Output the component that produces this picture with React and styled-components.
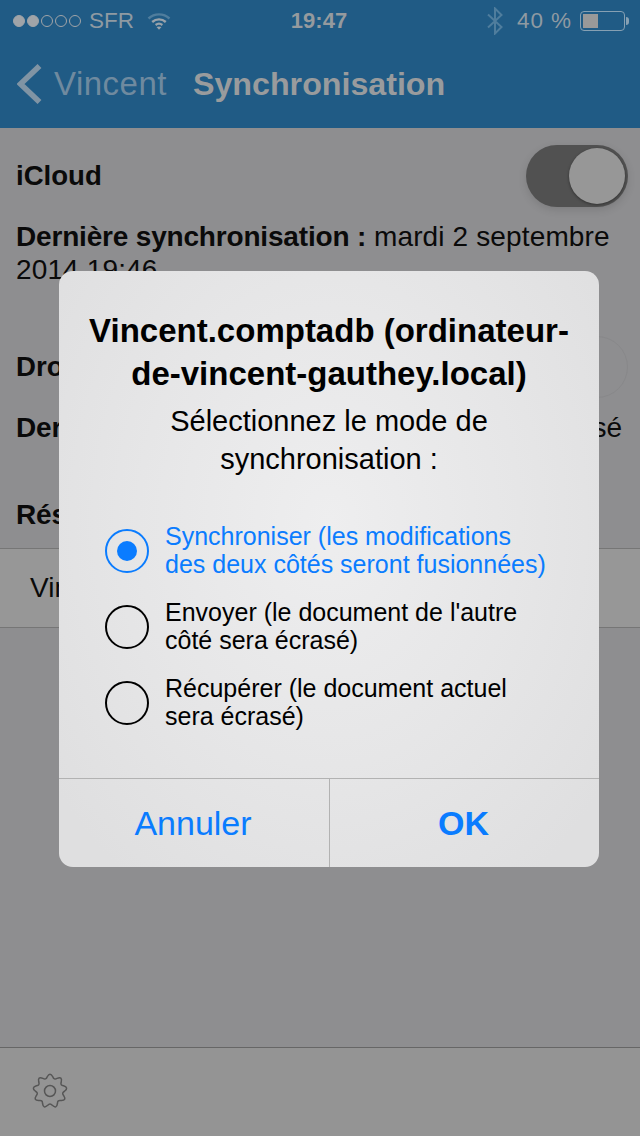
import React from "react";
import styled, { createGlobalStyle } from "styled-components";

const Global = createGlobalStyle`
  html, body { margin: 0; padding: 0; }
  body { font-family: "Liberation Sans", Arial, sans-serif; background: #8e8e90; }
  * { box-sizing: border-box; }
`;
const Screen = styled.div`
  position: relative; width: 640px; height: 1136px; overflow: hidden;
  display: flex; flex-direction: column; background: #8e8e90; color: #0a0a0a;
`;
const Header = styled.header`
  height: 128px; flex: none; background: #205b85; display: flex; flex-direction: column;
`;
const StatusBar = styled.div`
  height: 42px; display: grid; grid-template-columns: 1fr auto 1fr; align-items: center;
  padding: 0 15px 0 13px; font-size: 22.5px; color: #8f9aa2;
`;
const StatusLeft = styled.div`display: flex; align-items: center; gap: 8px;`;
const Carrier = styled.span`margin-right: 5px;`;
const Dots = styled.div`display: flex; gap: 2px;`;
const Dot = styled.span`
  width: 12px; height: 12px; border-radius: 50%;
  border: 1px solid #a0a4a8; background: ${p => (p.$on ? "#a0a4a8" : "transparent")};
`;
const Time = styled.div`font-weight: 700; color: #959a9e; font-size: 22px;`;
const StatusRight = styled.div`display: flex; align-items: center; justify-content: flex-end;`;
const Percent = styled.span`margin: 0 8px 0 14px; white-space: nowrap; letter-spacing: .9px;`;
const Battery = styled.div`
  position: relative; width: 45px; height: 20px; border: 1px solid #86a0b3; border-radius: 4px; padding: 2px;
  &::after { content: ""; position: absolute; right: -5px; top: 5px; width: 3px; height: 8px; background: #86a0b3; border-radius: 0 3px 3px 0; }
`;
const BatteryFill = styled.div`width: 15px; height: 100%; background: #999;`;
const Nav = styled.nav`
  flex: 1; display: flex; align-items: center; padding: 0 0 2px 17px;
`;
const Back = styled.span`font-size: 33px; margin-left: 12px; color: #6f8a9f; letter-spacing: .5px;`;
const Title = styled.span`font-size: 32.25px; font-weight: 700; margin-left: 26px; color: #999b9d; letter-spacing: -.03px;`;
const Content = styled.main`flex: 1; padding-top: 28px; display: flex; flex-direction: column;`;
const SwitchRow = styled.div`
  height: 40px; margin-top: ${p => p.$top || 0}px; padding: 0 12px 0 16px;
  display: flex; align-items: center; justify-content: space-between;
  font-size: 27.6px; font-weight: 700;
`;
const Toggle = styled.div`
  position: relative; width: 102px; height: 62px; border-radius: 31px; flex: none;
  background: ${p => (p.$on ? "#515151" : "transparent")};
  border: ${p => (p.$on ? "none" : "1.5px solid #88888a")};
  box-shadow: ${p => (p.$on ? "0 3px 8px rgba(0,0,0,.12)" : "none")};
`;
const Knob = styled.div`
  position: absolute; right: 3px; top: 3px; width: 56px; height: 56px; border-radius: 50%;
  background: #979797; box-shadow: 0 1px 3px rgba(0,0,0,.4);
`;
const Para = styled.p`
  margin: ${p => p.$top || 0}px 0 0; padding: 0 16px; font-size: 28px; line-height: 33px; letter-spacing: .135px;
`;
const Label = styled.b`font-weight: 700; letter-spacing: -.18px;`;
const List = styled.div`
  margin-top: 17px; height: 80px; padding-left: 30px; display: flex; align-items: center;
  background: #979797; border-top: 1px solid #767676; border-bottom: 1px solid #767676; font-size: 28px;
`;
const Spacer = styled.div`flex: 1;`;
const Toolbar = styled.footer`
  height: 89px; flex: none; background: #949494; border-top: 1px solid #666;
  display: flex; align-items: center; padding: 0 0 2px 32px;
`;
const Alert = styled.section`
  position: absolute; left: 59px; top: 271px; width: 540px; height: 596px; border-radius: 14px; overflow: hidden;
  background: radial-gradient(ellipse at 50% 42%, #eeeeef 0%, #e6e6e7 50%, #dfdfe0 90%);
  display: flex; flex-direction: column; color: #000;
`;
const AlertBody = styled.div`flex: 1; display: flex; flex-direction: column; align-items: center; padding-top: 38px;`;
const AlertTitle = styled.h2`margin: 0; width: 500px; font-size: 33px; line-height: 43px; font-weight: 700; text-align: center;`;
const Message = styled.p`margin: 7px 0 0; font-size: 29px; line-height: 38px; text-align: center; width: 420px;`;
const Options = styled.div`width: 100%; margin-top: 44px; padding-left: 46px; display: flex; flex-direction: column; gap: 20px;`;
const Option = styled.div`
  display: flex; align-items: center; gap: 16px; height: 56px;
  color: ${p => (p.$active ? "#0a7cff" : "#000")};
`;
const Radio = styled.div`
  width: 44px; height: 44px; margin-top: 2px; border-radius: 50%; flex: none; border: 2px solid currentColor;
  display: flex; align-items: center; justify-content: center;
`;
const RadioDot = styled.div`width: 20px; height: 20px; border-radius: 50%; background: currentColor;`;
const OptionText = styled.div`font-size: 25px; line-height: 28px; white-space: pre-line;`;
const Buttons = styled.div`height: 89px; flex: none; display: grid; grid-template-columns: 270px 270px; border-top: 1px solid #b2b2b2;`;
const ActionButton = styled.button`
  border: 0; background: transparent; font-family: inherit; font-size: 34px; padding: 0 2px 0 0; color: #0a7cff;
  font-weight: ${p => (p.$strong ? 700 : 400)};
  border-left: ${p => (p.$strong ? "1px solid #b2b2b2" : "none")};
`;

const Wifi = () => (
  <svg width="24" height="18" viewBox="0 0 24 18" fill="none">
    <path d="M1.5 6.5C7.5 1 16.5 1 22.5 6.5" stroke="#4f7d9d" strokeWidth="2.4" />
    <path d="M5.2 10C9.2 6.5 14.8 6.5 18.8 10" stroke="#9aa3aa" strokeWidth="2.4" />
    <path d="M8.6 13C10.6 11.5 13.4 11.5 15.4 13" stroke="#9aa3aa" strokeWidth="2.2" />
    <path d="M9.5 15L12 17.8 14.5 15C13 14.2 11 14.2 9.5 15Z" fill="#9aa3aa" />
  </svg>
);
const Bluetooth = () => (
  <svg width="16" height="28" viewBox="0 0 16 28" fill="none" stroke="#4f7d9d" strokeWidth="2">
    <path d="M1 7.5L14.5 20 8 26.5V1.5L14.5 8 1 20.5" />
  </svg>
);
const Chevron = () => (
  <svg width="25" height="40" viewBox="0 0 25 40" fill="none" stroke="#8094a4" strokeWidth="5.6">
    <path d="M22.5 2L3.5 20 22.5 38" />
  </svg>
);
const gearPath = () => {
  const teeth = 9, s = Math.PI / teeth;
  const p = (r, t) => `${(18 + r * Math.cos(t)).toFixed(2)} ${(18 + r * Math.sin(t)).toFixed(2)}`;
  let d = "";
  for (let i = 0; i < teeth; i++) {
    const a = (i / teeth) * Math.PI * 2 - Math.PI / 2;
    d += `${i ? "Q" + p(11.5, a - s) + " " : "M"}${p(14.5, a - s * 0.55)} Q${p(19.5, a)} ${p(14.5, a + s * 0.55)} `;
  }
  const last = -Math.PI / 2 - s;
  return d + `Q${p(11.5, last)} ${p(14.5, -Math.PI / 2 - s * 0.55)}Z`;
};
const Gear = () => (
  <svg width="36" height="36" viewBox="0 0 36 36" fill="none" stroke="#565656" strokeWidth="1.5">
    <path d={gearPath()} />
    <circle cx="18" cy="18" r="5.5" />
  </svg>
);

export default function App() {
  return (
    <Screen>
      <Global />
      <Header>
        <StatusBar>
          <StatusLeft>
            <Dots>{[1, 1, 0, 0, 0].map((on, i) => <Dot key={i} $on={!!on} />)}</Dots>
            <Carrier>SFR</Carrier>
            <Wifi />
          </StatusLeft>
          <Time>19:47</Time>
          <StatusRight>
            <Bluetooth />
            <Percent>40 %</Percent>
            <Battery><BatteryFill /></Battery>
          </StatusRight>
        </StatusBar>
        <Nav>
          <Chevron />
          <Back>Vincent</Back>
          <Title>Synchronisation</Title>
        </Nav>
      </Header>
      <Content>
        <SwitchRow>iCloud<Toggle $on><Knob /></Toggle></SwitchRow>
        <Para $top={24}><Label>Dernière synchronisation :</Label> mardi 2 septembre 2014 19:46</Para>
        <SwitchRow $top={61}>Dropbox<Toggle /></SwitchRow>
        <Para $top={24}><Label>Dernière synchronisation :</Label> Jamais synchronisé</Para>
        <Para $top={54}><Label>Résultat</Label></Para>
        <List>Vincent.comptadb</List>
        <Spacer />
      </Content>
      <Toolbar><Gear /></Toolbar>
      <Alert>
        <AlertBody>
          <AlertTitle>Vincent.comptadb (ordinateur-de-vincent-gauthey.local)</AlertTitle>
          <Message>Sélectionnez le mode de synchronisation :</Message>
          <Options>
            <Option $active>
              <Radio><RadioDot /></Radio>
              <OptionText>{"Synchroniser (les modifications\ndes deux côtés seront fusionnées)"}</OptionText>
            </Option>
            <Option>
              <Radio />
              <OptionText>{"Envoyer (le document de l'autre\ncôté sera écrasé)"}</OptionText>
            </Option>
            <Option>
              <Radio />
              <OptionText>{"Récupérer (le document actuel\nsera écrasé)"}</OptionText>
            </Option>
          </Options>
        </AlertBody>
        <Buttons>
          <ActionButton>Annuler</ActionButton>
          <ActionButton $strong>OK</ActionButton>
        </Buttons>
      </Alert>
    </Screen>
  );
}
